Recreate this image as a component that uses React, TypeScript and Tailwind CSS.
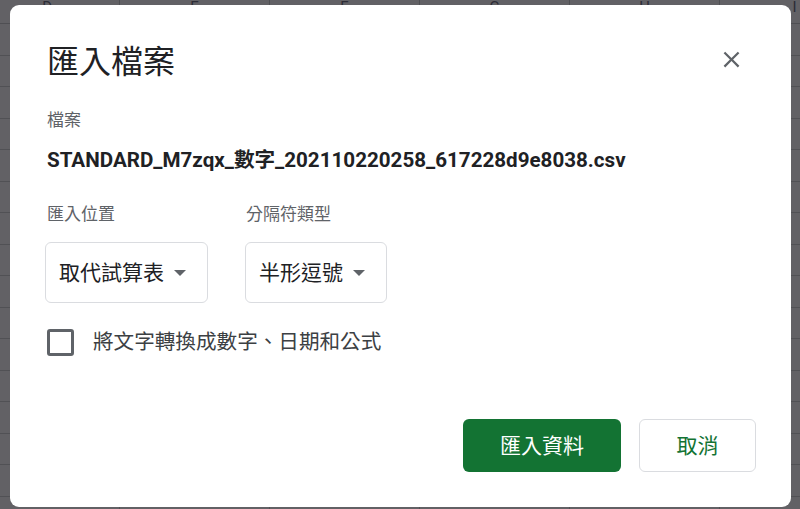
import React from "react";

const FONT = 'Roboto, "Noto Sans CJK TC", "Noto Sans", sans-serif';

const cols = [
  { w: 120, letter: "D", off: -30 },
  { w: 150, letter: "E" },
  { w: 150, letter: "F" },
  { w: 150, letter: "G" },
  { w: 150, letter: "H" },
  { w: 150, letter: "I" },
];

function Sheet() {
  const rows = Array.from({ length: 16 });
  return (
    <div className="flex flex-col w-[800px] h-[509px] overflow-hidden bg-[#626165]">
      <div className="flex h-[24px] shrink-0 border-b border-[#4f4f53]">
        {cols.map((c, i) => (
          <div
            key={i}
            className={
              i === 0
                ? "w-[120px] shrink-0 border-r border-[#4f4f53] flex justify-end pr-[67px] text-[15px] leading-[14px] text-[#2c2c36]"
                : "w-[150px] shrink-0 border-r border-[#4f4f53] flex justify-center text-[15px] leading-[14px] text-[#2c2c36]"
            }
          >
            {c.letter}
          </div>
        ))}
      </div>
      {rows.map((_, r) => (
        <div key={r} className="flex h-[31.5px] shrink-0 border-b border-[#515155]">
          {cols.map((c, i) => (
            <div
              key={i}
              className={
                i === 0
                  ? "w-[120px] shrink-0 border-r border-[#515155]"
                  : "w-[150px] shrink-0 border-r border-[#515155]"
              }
            />
          ))}
        </div>
      ))}
    </div>
  );
}

function Dropdown({ label }: { label: string }) {
  return (
    <div className="flex items-center h-[61px] border border-[#dadce0] rounded-[6px] pl-[13px] pr-[21px] gap-[10px]">
      <span className="text-[21px] leading-[28px] text-[#202124] whitespace-nowrap">{label}</span>
      <span className="w-0 h-0 border-l-[6px] border-r-[6px] border-t-[6px] border-l-transparent border-r-transparent border-t-[#5f6368]" />
    </div>
  );
}

export default function App() {
  return (
    <div className="relative w-[800px] h-[509px] overflow-hidden" style={{ fontFamily: FONT }}>
      <Sheet />
      <div className="absolute left-[10px] top-[5px] w-[781px] h-[502px] bg-white rounded-[9px] flex flex-col pl-[37px] pr-[35px] pt-[37px] pb-[35px]">
        <div className="flex items-start justify-between">
          <h1 className="text-[32px] leading-[40px] text-[#202124] font-normal">匯入檔案</h1>
          <button className="mr-[11px] mt-[4px] w-[27px] h-[27px] text-[#5f6368]">
            <svg viewBox="0 0 24 24" className="w-[27px] h-[27px]" fill="currentColor">
              <path d="M19 6.41L17.59 5 12 10.59 6.41 5 5 6.41 10.59 12 5 17.59 6.41 19 12 13.41 17.59 19 19 17.59 13.41 12z" />
            </svg>
          </button>
        </div>
        <div className="mt-[26px] text-[17px] leading-[24px] text-[#5f6368]">檔案</div>
        <div className="mt-[14px] text-[20.6px] leading-[28px] font-bold text-[#202124] whitespace-nowrap">
          STANDARD_M7zqx_數字_202110220258_617228d9e8038.csv
        </div>
        <div className="mt-[28px] -ml-[2px] flex gap-[37px]">
          <div className="flex flex-col">
            <div className="pl-[2px] text-[17px] leading-[24px] text-[#5f6368]">匯入位置</div>
            <div className="mt-[16px]">
              <Dropdown label="取代試算表" />
            </div>
          </div>
          <div className="flex flex-col">
            <div className="pl-[1px] text-[17px] leading-[24px] text-[#5f6368]">分隔符類型</div>
            <div className="mt-[16px]">
              <Dropdown label="半形逗號" />
            </div>
          </div>
        </div>
        <div className="mt-[25px] flex items-center gap-[19px]">
          <div className="w-[27px] h-[27px] border-[3px] border-[#5f6368] rounded-[3px]" />
          <span className="text-[20.6px] leading-[28px] text-[#3c4043]">將文字轉換成數字、日期和公式</span>
        </div>
        <div className="mt-auto flex justify-end gap-[18px]">
          <button className="w-[158px] h-[53px] rounded-[6px] bg-[#137333] text-white text-[21px] leading-[28px]">
            匯入資料
          </button>
          <button className="w-[117px] h-[53px] rounded-[6px] border border-[#dadce0] bg-white text-[#137333] text-[21px] leading-[28px]">
            取消
          </button>
        </div>
      </div>
    </div>
  );
}
